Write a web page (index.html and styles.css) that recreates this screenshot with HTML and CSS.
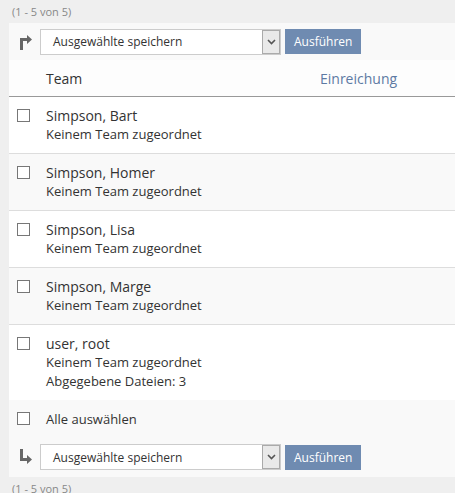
FILE: index.html
```html
<!DOCTYPE html>
<html lang="de">
<head>
  <meta charset="UTF-8">
  <title>Einreichungen</title>
  <link rel="stylesheet" href="styles.css">
</head>
<body>
  <div class="numinfo">(1 - 5 von 5)</div>

  <div class="panel">
    <div class="toolbar">
      <svg class="arrow" width="14" height="16" viewBox="0 0 14 16">
        <path d="M2 16V4h7V1l5 4.5L9 10V7H5v9z" fill="#666"/>
      </svg>
      <div class="select">
        <span class="select-text">Ausgewählte speichern</span>
        <span class="select-btn">
          <svg width="9" height="6" viewBox="0 0 9 6"><path d="M1 1l3.5 3.5L8 1" fill="none" stroke="#555" stroke-width="1.6"/></svg>
        </span>
      </div>
      <button class="run">Ausführen</button>
    </div>

    <div class="head">
      <span class="col-team">Team</span>
      <span class="col-sub">Einreichung</span>
    </div>

    <div class="row">
      <span class="check"></span>
      <div class="cell">
        <div class="name">Simpson, Bart</div>
        <div>Keinem Team zugeordnet</div>
      </div>
    </div>
    <div class="row alt">
      <span class="check"></span>
      <div class="cell">
        <div class="name">Simpson, Homer</div>
        <div>Keinem Team zugeordnet</div>
      </div>
    </div>
    <div class="row">
      <span class="check"></span>
      <div class="cell">
        <div class="name">Simpson, Lisa</div>
        <div>Keinem Team zugeordnet</div>
      </div>
    </div>
    <div class="row alt">
      <span class="check"></span>
      <div class="cell">
        <div class="name">Simpson, Marge</div>
        <div>Keinem Team zugeordnet</div>
      </div>
    </div>
    <div class="row last">
      <span class="check"></span>
      <div class="cell">
        <div class="name">user, root</div>
        <div>Keinem Team zugeordnet</div>
        <div>Abgegebene Dateien: 3</div>
      </div>
    </div>

    <div class="select-all">
      <span class="check"></span>
      <span>Alle auswählen</span>
    </div>

    <div class="toolbar bottom">
      <svg class="arrow" width="14" height="16" viewBox="0 0 14 16">
        <path d="M2 0v12h7v3l5-4.5L9 6v3H5V0z" fill="#666"/>
      </svg>
      <div class="select">
        <span class="select-text">Ausgewählte speichern</span>
        <span class="select-btn">
          <svg width="9" height="6" viewBox="0 0 9 6"><path d="M1 1l3.5 3.5L8 1" fill="none" stroke="#555" stroke-width="1.6"/></svg>
        </span>
      </div>
      <button class="run">Ausführen</button>
    </div>
  </div>

  <div class="numinfo">(1 - 5 von 5)</div>
</body>
</html>
```

FILE: styles.css
```css
body {
  margin: 0;
  background-color: #efefef;
  font-family: "Open Sans", sans-serif;
  font-size: 13px;
  color: #333;
}

.numinfo {
  height: 23px;
  line-height: 23px;
  padding-left: 12px;
  font-size: 11px;
  color: #888;
}

.panel {
  margin-left: 9px;
  background: #fff;
}

.toolbar {
  display: flex;
  align-items: center;
  height: 37px;
  padding-left: 9px;
  background: #f9f9f9;
}

.toolbar.bottom {
  height: 40px;
}

.arrow {
  margin-right: 8px;
}

.select {
  display: flex;
  align-items: center;
  width: 239px;
  height: 24px;
  border: 1px solid #ccc;
  background: #fff;
}

.select-text {
  flex: 1;
  padding-left: 12px;
  font-size: 12px;
}

.select-btn {
  display: flex;
  align-items: center;
  justify-content: center;
  width: 16px;
  height: 22px;
  border: 1px solid #aaa;
  background: #e9e9e9;
}

.run {
  height: 25px;
  margin-left: 4px;
  padding: 0 9px;
  border: none;
  background: #6f8bb1;
  color: #fff;
  font-family: "Open Sans", sans-serif;
  font-size: 12px;
}

.head {
  display: flex;
  align-items: center;
  height: 36px;
  background: #fdfdfd;
  border-bottom: 1px solid #999;
  font-size: 14px;
}

.col-team {
  width: 274px;
  padding-left: 37px;
}

.col-sub {
  color: #5d7aa3;
}

.row {
  display: flex;
  padding: 9px 0;
  line-height: 19px;
  border-bottom: 1px solid #ddd;
  background: #fff;
}

.row.alt {
  background: #f9f9f9;
}

.row.last {
  border-bottom: none;
}

.check {
  flex: none;
  width: 11px;
  height: 11px;
  margin: 3px 16px 0 8px;
  border: 1px solid #777;
  background: #fff;
}

.name {
  font-size: 14px;
}

.select-all {
  display: flex;
  align-items: center;
  height: 37px;
  background: #f9f9f9;
}

.select-all .check {
  margin-top: 0;
}
```
